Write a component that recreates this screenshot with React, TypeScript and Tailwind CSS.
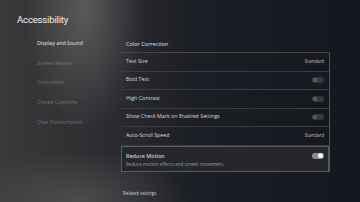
import React from "react";

interface Row {
  label: string;
  kind: "value" | "off" | "on" | "none";
  value?: string;
  hint?: string;
}

const NAV = ["Display and Sound", "Screen Reader", "Controllers", "Closed Captions", "Chat Transcription"];

const ROWS: Row[] = [
  { label: "Text Size", kind: "value", value: "Standard" },
  { label: "Bold Text", kind: "off" },
  { label: "High Contrast", kind: "off" },
  { label: "Show Check Mark on Enabled Settings", kind: "off" },
  { label: "Auto-Scroll Speed", kind: "value", value: "Standard" },
];

function Toggle({ on }: { on: boolean }) {
  return on ? (
    <div className="flex h-[6px] w-[12px] items-center justify-end rounded-full bg-[#8a8c92] px-[1px]">
      <div className="h-[5px] w-[5px] rounded-full bg-white" />
    </div>
  ) : (
    <div className="flex h-[6px] w-[12px] items-center rounded-full bg-[#36383e] px-[1px]">
      <div className="h-[4px] w-[4px] rounded-full border border-[#74767c]" />
    </div>
  );
}

export default function App() {
  return (
    <div
      className="relative h-[202px] w-[360px] overflow-hidden text-white"
      style={{ fontFamily: "'Open Sans', 'Liberation Sans', sans-serif" }}
    >
      {/* backdrop */}
      <div className="absolute inset-0 bg-[linear-gradient(90deg,#3a3a3c_0%,#2c2c30_30%,#1c1e25_55%,#15171e_100%)]" />
      <div className="absolute inset-0 bg-[radial-gradient(ellipse_60px_120px_at_85px_10px,rgba(170,170,170,0.35),transparent)]" />
      <div className="absolute inset-0 bg-[radial-gradient(ellipse_110px_50px_at_80px_200px,rgba(110,110,110,0.45),transparent)]" />

      <div className="relative flex h-full flex-col">
        <div
          className="pl-[17px] pt-[14px] text-[9.6px] leading-[12px] tracking-[-0.2px] text-[#f0f0f0]"
          style={{ fontFamily: "Roboto, 'Liberation Sans', sans-serif" }}
        >
          Accessibility
        </div>

        <div className="flex">
          {/* left nav */}
          <div className="flex w-[121px] flex-col pl-[37px] pt-[13px]">
            {NAV.map((n, i) => (
              <div
                key={n}
                className={`h-[19.7px] text-[5.3px] leading-[8px] ${i === 0 ? "text-[#e6e6e6]" : "text-[#727276]"}`}
              >
                {n}
              </div>
            ))}
          </div>

          {/* right panel */}
          <div className="flex w-[209px] flex-col pt-[14px]">
            <div className="flex h-[13px] items-start border-b border-[#44464c] pl-[5px] text-[5.5px] leading-[8px] text-[#e4e4e4]">
              Color Correction
            </div>
            <div className="border-r border-[#505258]">
              {ROWS.map((r) => (
                <div
                  key={r.label}
                  className="flex h-[18.5px] items-center justify-between border-b border-[#3a3c42] pl-[5px] pr-[5px] text-[5.3px] text-[#dcdcdc]"
                >
                  <span>{r.label}</span>
                  {r.kind === "value" && <span className="text-[4.5px] text-[#bfbfc2]">{r.value}</span>}
                  {r.kind === "off" && <Toggle on={false} />}
                </div>
              ))}
              <div className="flex h-[26px] justify-between border border-[#5a5c62] bg-[#25272d] pl-[4px] pr-[4px] pt-[5px]">
                <div className="flex flex-col">
                  <span className="text-[5.5px] leading-[8px] text-[#ececec]">Reduce Motion</span>
                  <span className="text-[4.6px] leading-[8px] text-[#9a9ca0]">Reduce motion effects and screen movement.</span>
                </div>
                <div className="pt-[1px]">
                  <Toggle on />
                </div>
              </div>
            </div>
            <div className="pl-[2px] pt-[18px] text-[4.5px] leading-[6px] text-[#d0d0d0]">Related settings</div>
          </div>
        </div>
      </div>
    </div>
  );
}
